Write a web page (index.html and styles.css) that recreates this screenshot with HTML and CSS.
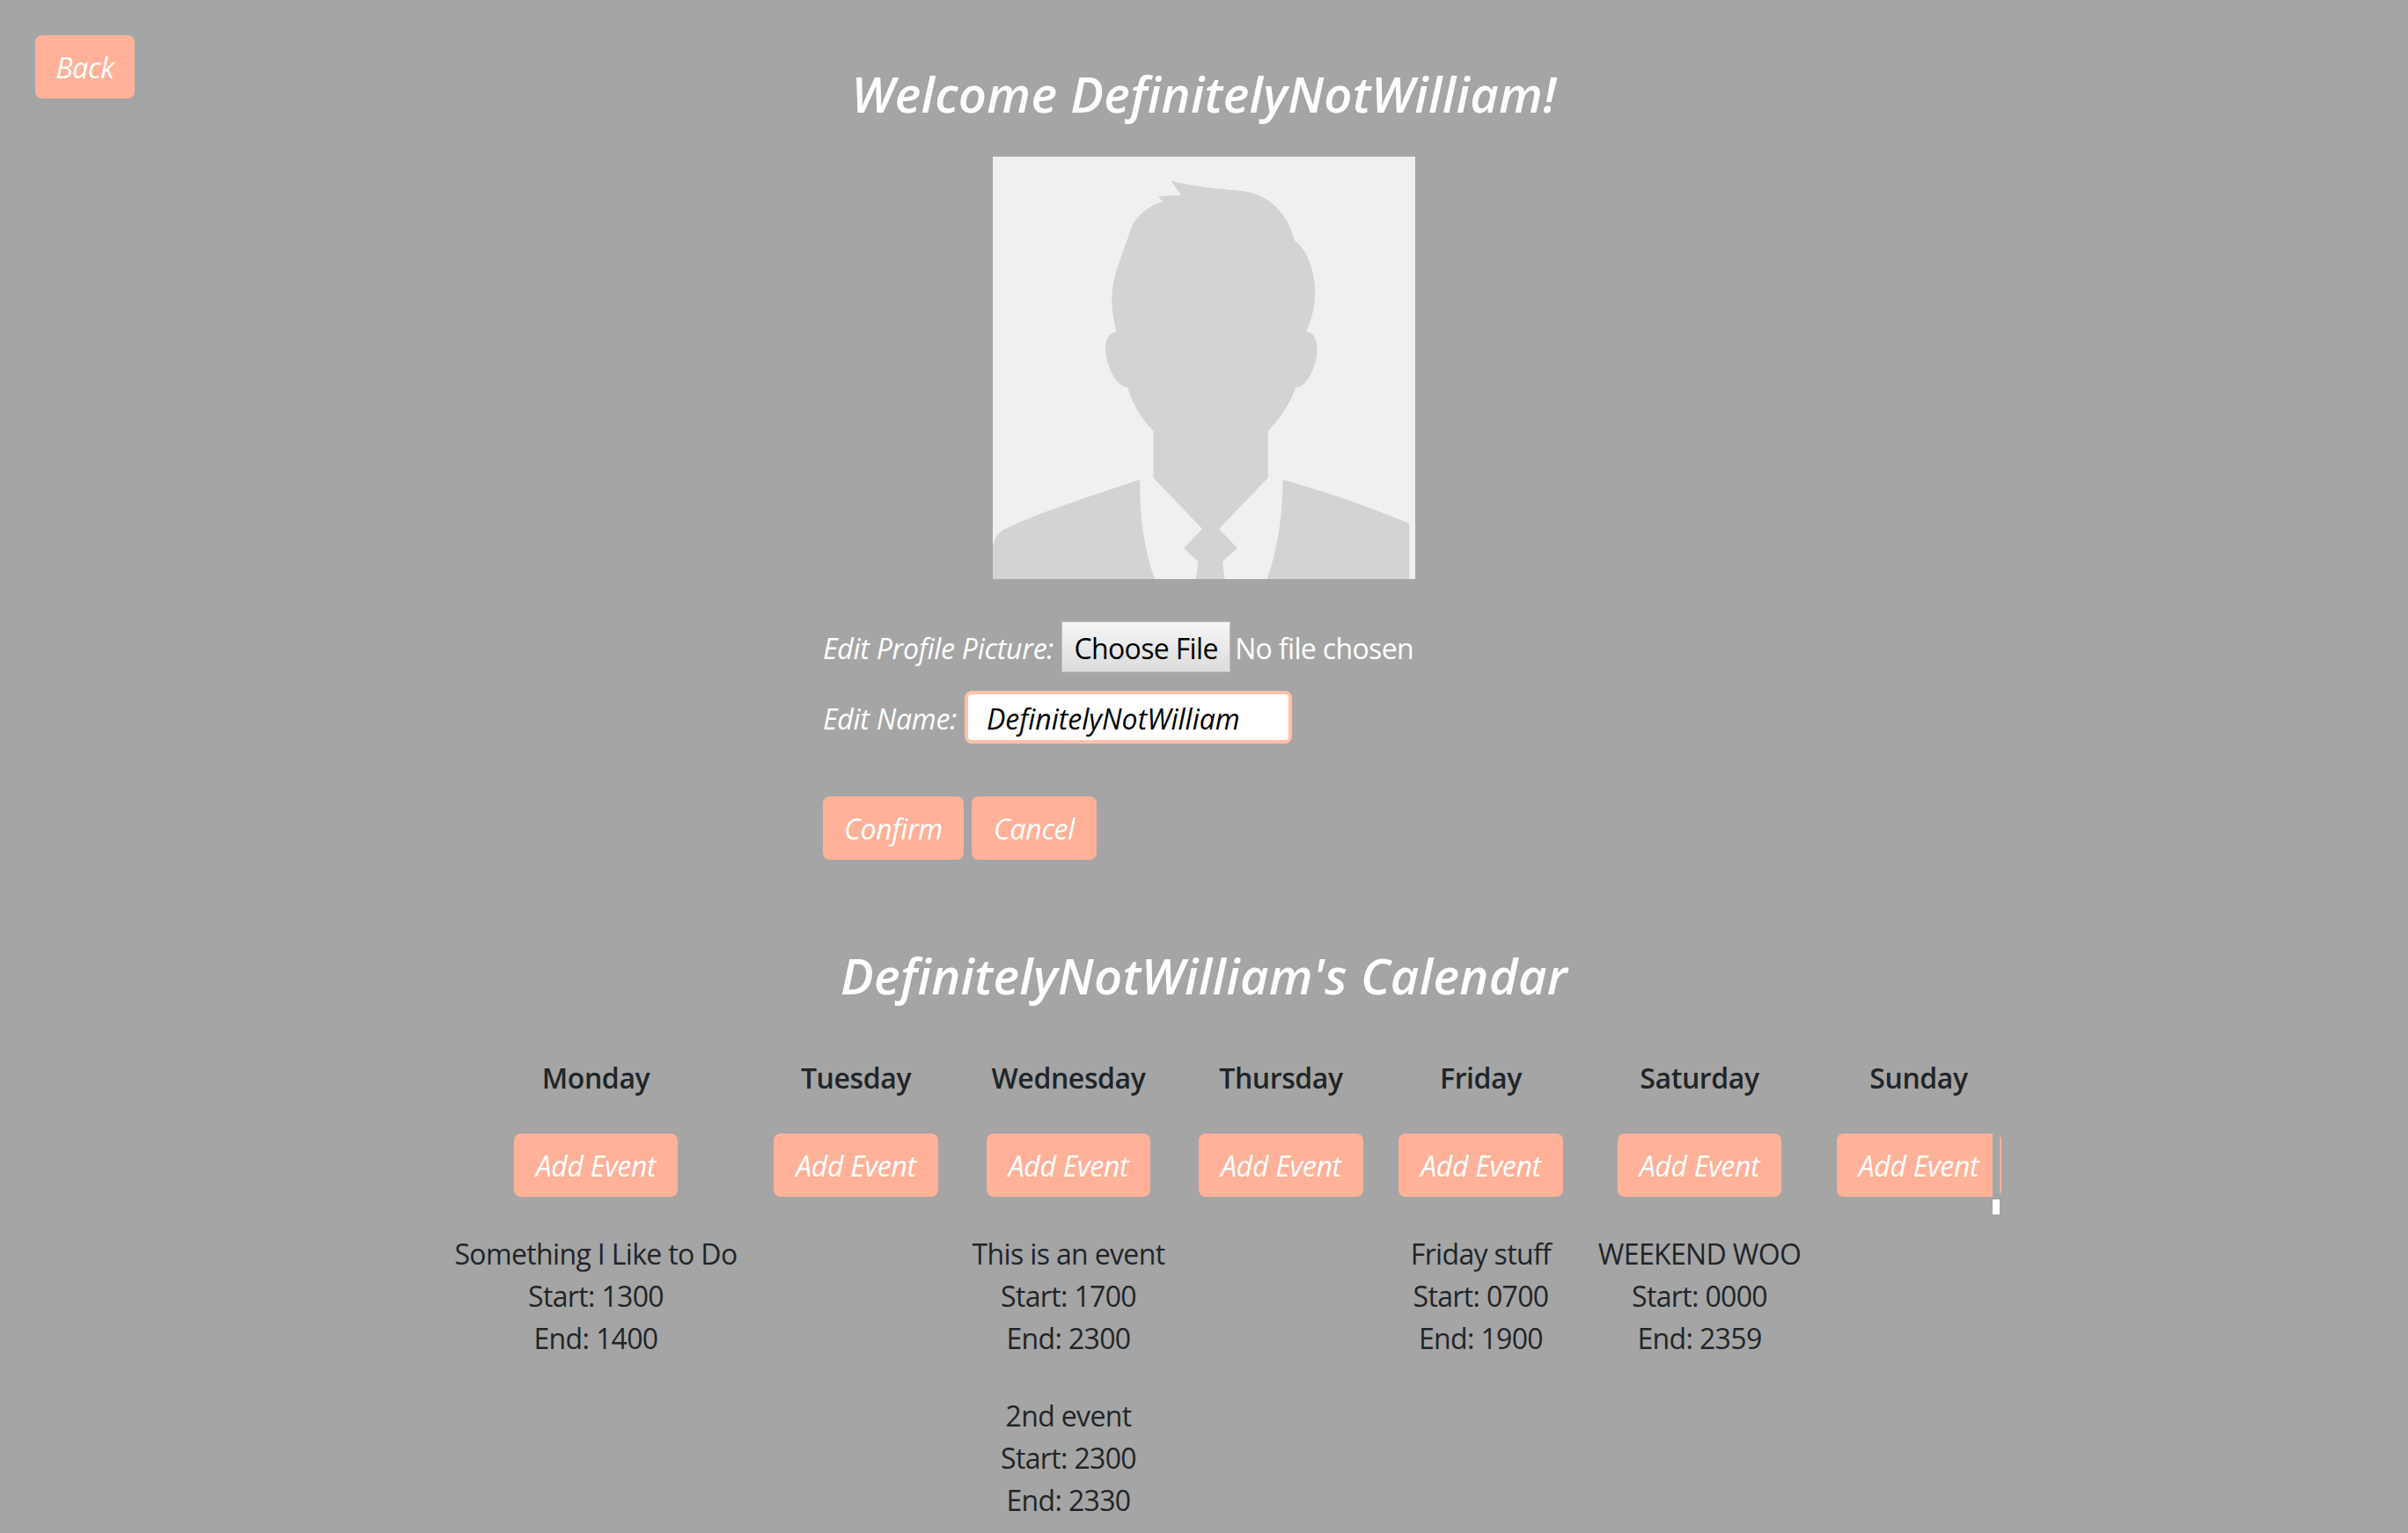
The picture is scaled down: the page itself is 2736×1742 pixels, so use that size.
FILE: index.html
```html
<!DOCTYPE html>
<html lang="en">
<head>
    <meta charset="UTF-8">
    <meta name="viewport" content="width=device-width, initial-scale=1.0">
    <title>Profile</title>
    <link rel="stylesheet" href="styles.css">
</head>
<body>
    <header class="top">
        <button class="btn back">Back</button>
        <h3 class="title">Welcome DefinitelyNotWilliam!</h3>
    </header>

    <svg class="avatar" viewBox="0 0 480 480" role="img" aria-label="Profile picture">
        <rect width="480" height="480" fill="#f0f0f0"/>
        <path fill="#d3d3d3" d="M202.5 27 L214 44 L188 45 L193 51 C178 56 163 66 157 82 C150 104 139 128 136 150 C134 168 137 185 140.5 199 C132 200 128 208 128 219 C129 235 138 261 153 262 C159 282 170 299 182.5 312 L182.5 365 L238 423 L217 445 L233.5 460 L231 480 L263.5 480 L261 460 L278 445 L257 423 L312.7 365 L312.7 312 C326 298 338 281 344.3 262 C358 262 367 238 368.5 222 C369 208 365 199 356.4 199 C363 182 367 168 366 149 C365 130 358 106 342.6 95 C336 68 318 46 290 40 C262 36 226 35 202.5 27 Z"/>
        <path fill="#d3d3d3" d="M167 367 C110 386 50 405 12 424 C6 428 2 434 0 442 L0 480 L184 480 C172 448 167 410 167 367 Z"/>
        <path fill="#d3d3d3" d="M329.5 367 C378 381 430 398 473.5 417 L473.5 480 L311.6 480 C323 448 329.5 410 329.5 367 Z"/>
    </svg>

    <form class="edit-form">
        <div class="file-row">
            <label class="field-label">Edit Profile Picture:</label>
            <span class="file-btn">Choose File</span>
            <span class="file-name">No file chosen</span>
        </div>
        <div class="name-row">
            <label class="field-label">Edit Name:</label>
            <span class="name-input">DefinitelyNotWilliam</span>
        </div>
        <div class="form-actions">
            <button type="button" class="btn confirm">Confirm</button>
            <button type="button" class="btn cancel">Cancel</button>
        </div>
    </form>

    <h3 class="title cal-title">DefinitelyNotWilliam's Calendar</h3>

    <div class="calendar">
        <div class="day">
            <div class="day-name">Monday</div>
            <button class="btn add">Add Event</button>
            <div class="event">Something I Like to Do<br>Start: 1300<br>End: 1400</div>
        </div>
        <div class="day">
            <div class="day-name">Tuesday</div>
            <button class="btn add">Add Event</button>
        </div>
        <div class="day">
            <div class="day-name">Wednesday</div>
            <button class="btn add">Add Event</button>
            <div class="event">This is an event<br>Start: 1700<br>End: 2300</div>
            <div class="event">2nd event<br>Start: 2300<br>End: 2330</div>
        </div>
        <div class="day">
            <div class="day-name">Thursday</div>
            <button class="btn add">Add Event</button>
        </div>
        <div class="day">
            <div class="day-name">Friday</div>
            <button class="btn add">Add Event</button>
            <div class="event">Friday stuff<br>Start: 0700<br>End: 1900</div>
        </div>
        <div class="day">
            <div class="day-name">Saturday</div>
            <button class="btn add">Add Event</button>
            <div class="event">WEEKEND WOO<br>Start: 0000<br>End: 2359</div>
        </div>
        <div class="day">
            <div class="day-name">Sunday</div>
            <div class="add-wrap">
                <button class="btn add">Add Event</button>
                <span class="scroll-stub"></span>
            </div>
        </div>
    </div>
</body>
</html>
```

FILE: styles.css
```css
body {
    margin: 0;
    background-color: #a5a5a5;
    color: #212529;
    font-family: "Open Sans", "Noto Sans", sans-serif;
    font-size: 32px;
    line-height: 48px;
    letter-spacing: -0.65px;
    overflow: hidden;
}

.btn {
    height: 72px;
    padding: 2px 0 0;
    border: 0;
    border-radius: 8px;
    background-color: #ffb199;
    color: white;
    font: inherit;
    font-style: italic;
    letter-spacing: -0.3px;
}

.top {
    display: grid;
    grid-template-columns: 1fr auto 1fr;
    align-items: start;
    padding: 40px 40px 0;
}

.back {
    width: 113px;
    justify-self: start;
}

.title {
    margin: 32px 0 0;
    color: white;
    font-size: 56px;
    font-style: italic;
    font-weight: 600;
    line-height: 68px;
    letter-spacing: 0.35px;
    text-align: center;
}

.avatar {
    display: block;
    width: 480px;
    height: 480px;
    margin: 38px auto 0;
}

.edit-form {
    width: 866px;
    margin: 48px auto 0;
}

.file-row, .name-row {
    display: flex;
    align-items: center;
    color: white;
}

.field-label {
    padding-top: 4px;
    font-style: italic;
    letter-spacing: -0.25px;
}

.file-btn {
    box-sizing: border-box;
    width: 192px;
    height: 58px;
    margin-left: 9px;
    border: 1px solid #bdbdbd;
    background: linear-gradient(#f6f6f6, #dcdcdc);
    color: black;
    line-height: 60px;
    text-align: center;
}

.file-name {
    margin-left: 5px;
    padding-top: 4px;
}

.name-row {
    margin-top: 21px;
}

.name-input {
    box-sizing: border-box;
    width: 372px;
    height: 60px;
    margin-left: 9px;
    padding-left: 21px;
    border: 4px solid #ffc0ac;
    border-radius: 8px;
    background-color: white;
    color: black;
    font-style: italic;
    letter-spacing: 0;
    line-height: 56px;
}

.form-actions {
    display: flex;
    gap: 9px;
    margin-top: 60px;
}

.confirm {
    width: 160px;
}

.cancel {
    width: 142px;
}

.cal-title {
    margin-top: 97px;
}

.calendar {
    display: grid;
    grid-template-columns: 324px 187px 216px 187px 187px 230px 188px;
    column-gap: 40px;
    margin-top: 59px;
    padding-left: 515px;
    text-align: center;
}

.day {
    display: flex;
    flex-direction: column;
    align-items: center;
}

.day-name {
    font-weight: 600;
    letter-spacing: -0.4px;
}

.add {
    width: 186.5px;
    margin-top: 39px;
}

.event {
    margin-top: 41px;
    white-space: nowrap;
}

.event + .event {
    margin-top: 40px;
}

.add-wrap {
    position: relative;
}

.add-wrap .add {
    width: 187px;
}

.scroll-stub {
    position: absolute;
    top: 39px;
    left: 177.5px;
    width: 8px;
    height: 75px;
    background-color: #a5a5a5;
    border-bottom: 17px solid white;
}
```
